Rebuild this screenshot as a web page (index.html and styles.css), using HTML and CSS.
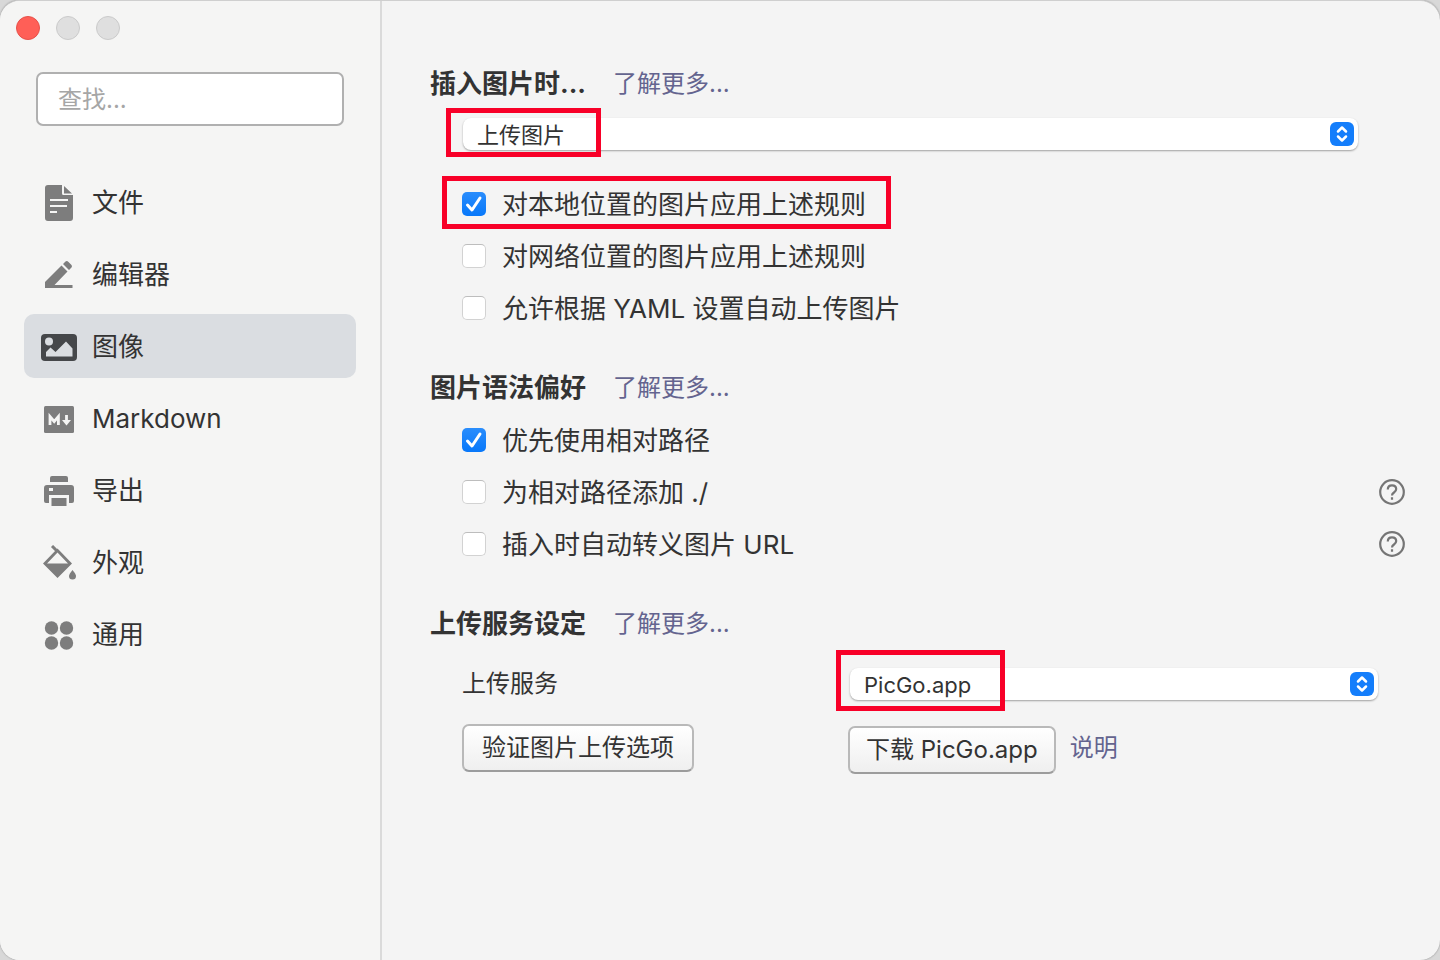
FILE: index.html
```
<!DOCTYPE html>
<html lang="zh-CN">
<head>
<meta charset="utf-8">
<meta name="viewport" content="width=device-width, initial-scale=1">
<title>图像</title>
<link rel="stylesheet" href="styles.css">
</head>
<body>
<div class="window">
  <aside class="sidebar">
    <div class="traffic">
      <button class="light light-close" type="button" aria-label="关闭"></button>
      <button class="light" type="button" aria-label="最小化"></button>
      <button class="light" type="button" aria-label="缩放"></button>
    </div>
    <input class="search" type="text" placeholder="查找..." aria-label="查找">
    <nav class="nav">
      <a class="nav-item" href="#file">
        <svg class="nav-icon" viewBox="0 0 36 36"><path fill="currentColor" d="M7 0H21V8.500Q21 10 22.500 10H32V33Q32 36 29 36H7Q4 36 4 33V3Q4 0 7 0ZM23 1L31 8.500H23Z"/><path d="M9 15H27M9 21H26M9 27H16" stroke="#f5f5f4" stroke-width="2"/></svg>
        <span>文件</span></a>
      <a class="nav-item" href="#editor">
        <svg class="nav-icon" viewBox="0 0 36 36"><path fill="currentColor" d="M4 31V25L20.500 8.500L26.500 14.500L13.500 28H31.500V31ZM22 7L24.500 4.500Q26 3.500 27.500 5L30.500 8Q31.500 9.300 30.500 10.500L28 13Z"/></svg>
        <span>编辑器</span></a>
      <a class="nav-item nav-active" href="#image" aria-current="page">
        <svg class="nav-icon" viewBox="0 0 36 36"><rect y="5" width="36" height="27" rx="4" fill="currentColor"/><circle cx="8" cy="12.500" r="4" fill="#dadde1"/><path fill="#dadde1" d="M5 27.500V23L9.500 18.500L14.500 23L25 12.500L31.500 19.500V27.500Z"/></svg>
        <span>图像</span></a>
      <a class="nav-item" href="#markdown">
        <svg class="nav-icon" viewBox="0 0 36 36"><rect x="3" y="5" width="30" height="27" rx="1.500" fill="currentColor"/><path d="M9 24V15.500L13.200 20.500L17.400 15.500V24M25.500 14V20" fill="none" stroke="#f5f5f4" stroke-width="2.800"/><path fill="#f5f5f4" d="M21 19H30L25.500 24.500Z"/></svg>
        <span>Markdown</span></a>
      <a class="nav-item" href="#export">
        <svg class="nav-icon" viewBox="0 0 36 36"><path fill="currentColor" fill-rule="evenodd" d="M11 3H25Q27 3 27 5V9H9V5Q9 3 11 3ZM6 12H30Q33 12 33 15V28Q33 30 31 30H28V22H8V30H5Q3 30 3 28V15Q3 12 6 12ZM8 15V18H12V15ZM10.500 25H25.500V33H10.500Z"/></svg>
        <span>导出</span></a>
      <a class="nav-item" href="#appearance">
        <svg class="nav-icon" viewBox="0 0 36 36"><path d="M11 1L16 6" stroke="currentColor" stroke-width="3"/><path fill="currentColor" fill-rule="evenodd" d="M16.500 3.500L31 18.500L16.500 33L2 18.500ZM16.500 7.500L6 18.500H27Z"/><path fill="currentColor" d="M31.500 25Q35 29 35 31Q35 34.500 31.500 34.500Q28 34.500 28 31Q28 29 31.500 25Z"/></svg>
        <span>外观</span></a>
      <a class="nav-item" href="#general">
        <svg class="nav-icon" viewBox="0 0 36 36" fill="currentColor"><circle cx="10.500" cy="11" r="6.700"/><circle cx="25.500" cy="11" r="6.700"/><circle cx="10.500" cy="26" r="6.700"/><circle cx="25.500" cy="26" r="6.700"/></svg>
        <span>通用</span></a>
    </nav>
  </aside>

  <main class="content">
    <section>
      <header class="heading"><h2>插入图片时...</h2><a href="#more-insert">了解更多...</a></header>
      <div class="select-box insert-select">
        <select class="select" aria-label="插入图片时">
          <option>上传图片</option>
        </select>
        <svg class="stepper" viewBox="0 0 24 24"><rect width="24" height="24" rx="6"/><path d="M8 9.500L12 5.500L16 9.500M8 14.500L12 18.500L16 14.500"/></svg>
        <span class="mark mark-insert"></span>
      </div>
      <div class="options">
        <div class="option"><label class="choice"><span class="box"><input type="checkbox" checked><svg class="tick" viewBox="0 0 24 24"><path d="M5.500 13L10 18L18 6"/></svg></span>对本地位置的图片应用上述规则<span class="mark mark-local"></span></label></div>
        <div class="option"><label class="choice"><span class="box"><input type="checkbox"></span>对网络位置的图片应用上述规则</label></div>
        <div class="option"><label class="choice"><span class="box"><input type="checkbox"></span>允许根据 YAML 设置自动上传图片</label></div>
      </div>
    </section>

    <section>
      <header class="heading"><h2>图片语法偏好</h2><a href="#more-syntax">了解更多...</a></header>
      <div class="options options-tight">
        <div class="option"><label class="choice"><span class="box"><input type="checkbox" checked><svg class="tick" viewBox="0 0 24 24"><path d="M5.500 13L10 18L18 6"/></svg></span>优先使用相对路径</label></div>
        <div class="option"><label class="choice"><span class="box"><input type="checkbox"></span>为相对路径添加 ./</label>
          <button class="help" type="button" aria-label="帮助"><svg viewBox="0 0 26 26"><circle cx="13" cy="13" r="11.800"/><path d="M8.800 10.500Q8.800 6.300 13 6.300Q17.200 6.300 17.200 10Q17.200 12 15 13.500Q13 14.800 13 16.500M13 18.200V20.800"/></svg></button></div>
        <div class="option"><label class="choice"><span class="box"><input type="checkbox"></span>插入时自动转义图片 URL</label>
          <button class="help" type="button" aria-label="帮助"><svg viewBox="0 0 26 26"><circle cx="13" cy="13" r="11.800"/><path d="M8.800 10.500Q8.800 6.300 13 6.300Q17.200 6.300 17.200 10Q17.200 12 15 13.500Q13 14.800 13 16.500M13 18.200V20.800"/></svg></button></div>
      </div>
    </section>

    <section>
      <header class="heading"><h2>上传服务设定</h2><a href="#more-upload">了解更多...</a></header>
      <div class="service">
        <label class="service-label" for="service">上传服务</label>
        <div class="select-box">
          <select class="select" id="service">
            <option>PicGo.app</option>
          </select>
          <svg class="stepper" viewBox="0 0 24 24"><rect width="24" height="24" rx="6"/><path d="M8 9.500L12 5.500L16 9.500M8 14.500L12 18.500L16 14.500"/></svg>
          <span class="mark mark-service"></span>
        </div>
        <div class="actions"><button class="button button-verify" type="button">验证图片上传选项</button></div>
        <div class="actions actions-download"><button class="button" type="button">下载 PicGo.app</button><a href="#docs">说明</a></div>
      </div>
    </section>
  </main>
</div>
</body>
</html>
```
FILE: styles.css
```
* {
  box-sizing: border-box;
}

body {
  margin: 0;
  background: #d8d8d8;
  color: #333;
  font-family: Inter, "Noto Sans CJK SC", sans-serif;
  font-size: 26px;
  line-height: 40px;
}

button,
input,
select {
  font: inherit;
  color: inherit;
}

a {
  color: #64648f;
  font-size: 24px;
  text-decoration: none;
}

.window {
  display: flex;
  min-height: 100vh;
  overflow: hidden;
  border-top: 1px solid #cfcfcf;
  border-radius: 20px;
  background: #f4f4f4;
  box-shadow: 0 0 2px #888;
}

.sidebar {
  flex: none;
  width: 382px;
  padding: 15px 24px;
  border-right: 2px solid #dadada;
  background: #f5f5f4;
}

.traffic {
  display: flex;
  gap: 16px;
  margin-left: -8px;
}

.light {
  width: 24px;
  height: 24px;
  padding: 0;
  border: 1px solid #cacaca;
  border-radius: 50%;
  background: #dfdfdf;
}

.light-close {
  border-color: #e6514a;
  background: #ff5f57;
}

.search {
  display: block;
  width: 308px;
  height: 54px;
  margin: 32px 12px 44px;
  padding: 0 20px;
  border: 2px solid #b0b0b0;
  border-radius: 7px;
  background: #fff;
  font-size: 24px;
}

.search::placeholder {
  color: #a6a6a6;
  opacity: 1;
}

.nav {
  display: grid;
  gap: 8px;
}

.nav-item {
  display: flex;
  align-items: center;
  gap: 15px;
  height: 64px;
  padding: 2px 17px 0;
  border-radius: 10px;
  color: #333;
  font-size: 26px;
}

.nav-active {
  background: #dadde1;
}

.nav-icon {
  width: 36px;
  height: 36px;
  color: #7d7d7d;
}

.nav-active .nav-icon {
  color: #45474a;
}

.content {
  flex: 1;
  display: flex;
  flex-direction: column;
  gap: 33px;
  min-width: 0;
  padding: 63px 34px 40px 48px;
}

.heading {
  display: flex;
  gap: 25px;
}

h2 {
  min-width: 158px;
  margin: 0;
  font-size: 26px;
  font-weight: 700;
}

.select-box {
  position: relative;
  display: flex;
  align-items: center;
}

.insert-select {
  margin: 14px 48px 0 33px;
}

.select {
  width: 100%;
  height: 32px;
  padding: 2px 14px 0;
  appearance: none;
  border: 0;
  border-radius: 8px;
  background: #fff;
  box-shadow: 0 1px 2px rgba(0, 0, 0, 0.35);
  font-size: 22px;
  line-height: 30px;
}

.stepper {
  position: absolute;
  right: 4px;
  width: 24px;
  height: 24px;
  fill: #147efb;
  pointer-events: none;
}

.stepper path {
  fill: none;
  stroke: #fff;
  stroke-width: 2.5;
  stroke-linecap: round;
  stroke-linejoin: round;
}

.options {
  margin: 29px 0 0 32px;
}

.options-tight {
  margin-top: 7px;
}

.option {
  display: flex;
  align-items: center;
  justify-content: space-between;
  height: 52px;
}

.choice {
  position: relative;
  display: flex;
  align-items: center;
  gap: 16px;
}

.box {
  display: grid;
  margin-bottom: 2px;
}

.box > * {
  grid-area: 1 / 1;
}

.box input {
  width: 24px;
  height: 24px;
  margin: 0;
  appearance: none;
  border: 1px solid #d2d2d2;
  border-top-color: #bdbdbd;
  border-radius: 5px;
  background: #fff;
}

.box input:checked {
  border: 0;
  background: linear-gradient(#2a8dfc, #0878fa);
}

.tick {
  width: 24px;
  height: 24px;
  fill: none;
  stroke: #fff;
  stroke-width: 3;
  stroke-linecap: round;
  stroke-linejoin: round;
  pointer-events: none;
}

.help {
  width: 28px;
  height: 28px;
  margin-bottom: 2px;
  padding: 1px;
  border: 0;
  background: none;
}

.help svg {
  display: block;
  fill: none;
  stroke: #757575;
  stroke-width: 2.2;
}

.service {
  display: grid;
  grid-template-columns: 388px 1fr;
  margin: 20px 28px 0 32px;
  align-items: start;
}

.service-label {
  height: 60px;
  font-size: 24px;
}

.service .select-box {
  margin-top: 4px;
}

.actions {
  display: flex;
  align-items: flex-start;
  gap: 14px;
}

.actions a {
  line-height: 44px;
}

.actions-download {
  margin: 2px 0 0 -2px;
}

.button {
  height: 48px;
  padding: 0 16px;
  border: 2px solid #b9b9b9;
  border-bottom-color: #9c9c9c;
  border-radius: 7px;
  background: linear-gradient(#fff, #efefef);
  font-size: 24px;
}

.button-verify {
  min-width: 232px;
}

.mark {
  position: absolute;
  border: 5px solid #f80028;
  pointer-events: none;
}

.mark-insert {
  top: -10px;
  left: -17px;
  width: 155px;
  height: 49px;
}

.mark-local {
  inset: -9px -25px -4px -20px;
}

.mark-service {
  top: -18px;
  left: -14px;
  width: 169px;
  height: 61px;
}
```
